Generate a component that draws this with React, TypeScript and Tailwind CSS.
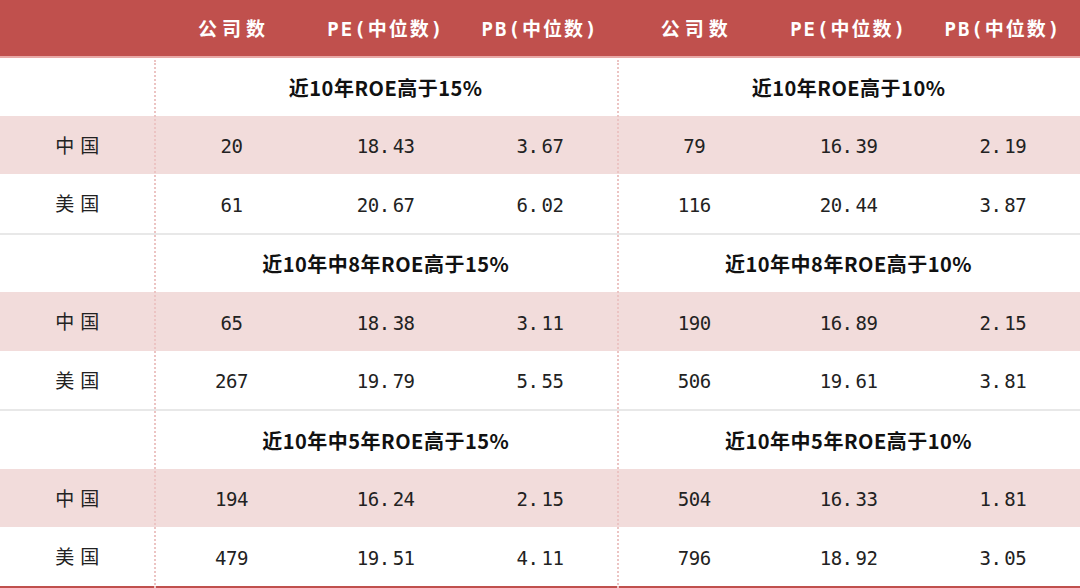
const groups = [
  {
    left: "近10年ROE高于15%",
    right: "近10年ROE高于10%",
    rows: [
      ["中国", "20", "18.43", "3.67", "79", "16.39", "2.19"],
      ["美国", "61", "20.67", "6.02", "116", "20.44", "3.87"],
    ],
  },
  {
    left: "近10年中8年ROE高于15%",
    right: "近10年中8年ROE高于10%",
    rows: [
      ["中国", "65", "18.38", "3.11", "190", "16.89", "2.15"],
      ["美国", "267", "19.79", "5.55", "506", "19.61", "3.81"],
    ],
  },
  {
    left: "近10年中5年ROE高于15%",
    right: "近10年中5年ROE高于10%",
    rows: [
      ["中国", "194", "16.24", "2.15", "504", "16.33", "1.81"],
      ["美国", "479", "19.51", "4.11", "796", "18.92", "3.05"],
    ],
  },
];

const cjk = "font-['Noto_Sans_CJK_SC',sans-serif]";
const num = "font-['DejaVu_Sans_Mono','Noto_Sans_CJK_SC',monospace]";

function Cell({ v, first }: { v: string; first?: boolean }) {
  if (first) {
    return (
      <div className={`flex items-center justify-center ${cjk} text-[19px] tracking-[6px] pl-[6px] text-[#222]`}>
        {v}
      </div>
    );
  }
  // the dot gets a little extra room after it, as in the reference
  const [a, b] = v.split(".");
  return (
    <div className={`flex items-center justify-center pt-[3px] ${num} text-[19px] tracking-[-0.5px] text-[#222]`}>
      {b === undefined ? (
        a
      ) : (
        <>
          {a}.<span className="ml-[3px]">{b}</span>
        </>
      )}
    </div>
  );
}

export default function App() {
  const heads = ["公司数", "PE(中位数)", "PB(中位数)", "公司数", "PE(中位数)", "PB(中位数)"];
  return (
    <div className="relative w-[1080px] h-[588px] bg-white overflow-hidden">
      {/* dotted column dividers */}
      <div className="absolute left-[154px] top-[60px] bottom-0 border-l-2 border-dotted border-[#ecc4c3]" />
      <div className="absolute left-[617px] top-[60px] bottom-0 border-l-2 border-dotted border-[#ecc4c3]" />

      <div className="grid grid-cols-7 h-[58px] bg-[#c0504d] border-b-2 border-[#e8a9a7]">
        <div />
        {heads.map((h, i) => (
          <div
            key={i}
            className={`flex items-center justify-center pt-[2px] text-white font-bold ${num} text-[19px] ${i % 3 === 0 ? "tracking-[5px] pl-[5px]" : "tracking-[2px]"}`}
          >
            {h}
          </div>
        ))}
      </div>

      {groups.map((g, gi) => (
        <div key={gi} className={gi < 2 ? "border-b-2 border-[#e8e8e8]" : ""}>
          <div className="grid grid-cols-7 h-[57.5px]">
            <div />
            <div className={`col-span-3 flex items-center justify-center pt-[2px] ${cjk} font-bold text-[20px] text-[#111] tracking-[0.5px]`}>
              {g.left}
            </div>
            <div className={`col-span-3 flex items-center justify-center pt-[2px] ${cjk} font-bold text-[20px] text-[#111] tracking-[0.5px]`}>
              {g.right}
            </div>
          </div>
          {g.rows.map((r, ri) => (
            <div key={ri} className={`grid grid-cols-7 h-[58.5px] ${ri === 0 ? "bg-[#f2dcdb]" : "bg-white"}`}>
              {r.map((v, ci) => (
                <Cell key={ci} v={v} first={ci === 0} />
              ))}
            </div>
          ))}
        </div>
      ))}
      <div className="h-[2px] bg-[#c0504d]" />
    </div>
  );
}
